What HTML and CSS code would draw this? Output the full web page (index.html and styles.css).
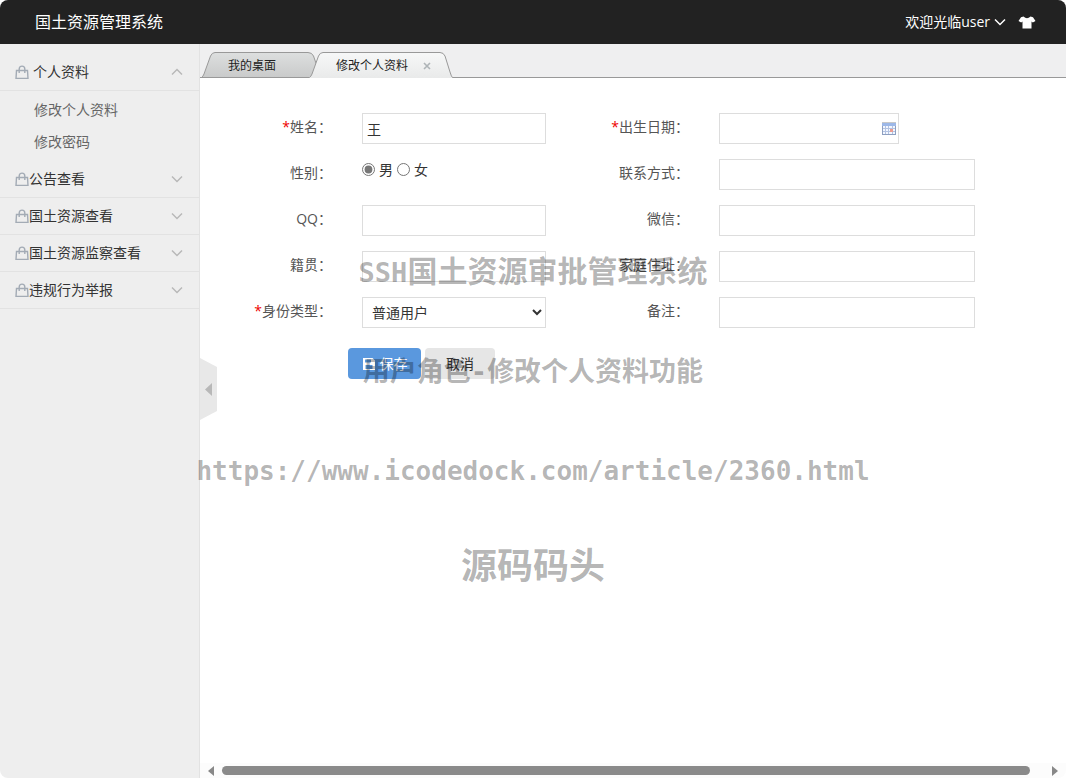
FILE: index.html
```html
<!DOCTYPE html>
<html lang="zh-CN">
<head>
<meta charset="utf-8">
<meta name="viewport" content="width=device-width, initial-scale=1">
<title>国土资源管理系统</title>
<link rel="stylesheet" href="styles.css">
</head>
<body>
<svg class="defs" aria-hidden="true">
  <symbol id="bag" viewBox="0 0 14 14"><path d="M1.5 5.5h11l.5 8H1zM4.2 8V4C4.200 .2 9.800 .2 9.800 4v4" fill="none" stroke="currentColor" stroke-width="1.400"/></symbol>
  <symbol id="down" viewBox="0 0 12 8"><path d="M1 1.500l5 5 5-5" fill="none" stroke="currentColor" stroke-width="1.500"/></symbol>
  <symbol id="up" viewBox="0 0 12 8"><path d="M1 6.500l5-5 5 5" fill="none" stroke="currentColor" stroke-width="1.500"/></symbol>
</svg>
<div class="app">
  <header class="topbar">
    <h1 class="brand">国土资源管理系统</h1>
    <div class="account">
      <button class="user" type="button">欢迎光临user
        <svg class="chevron" aria-hidden="true"><use href="#down"/></svg>
      </button>
      <button class="skin" type="button" aria-label="换肤">
        <svg width="18" height="13" viewBox="0 0 18 13" aria-hidden="true"><path d="M5.500.5Q9 4 12.500.5L15 1.200 17.500 5 14.800 6.500 13.500 5.500V12.500H4.500V5.500L3.200 6.500.5 5 3 1.200z" fill="#fff"/></svg>
      </button>
    </div>
  </header>
  <div class="body">
    <nav class="sidebar">
      <button class="group spaced" type="button" aria-expanded="true"><svg class="bag" aria-hidden="true"><use href="#bag"/></svg><span>个人资料</span><svg class="chevron" aria-hidden="true"><use href="#up"/></svg></button>
      <div class="submenu">
        <a href="#profile">修改个人资料</a>
        <a href="#password">修改密码</a>
      </div>
      <button class="group" type="button"><svg class="bag" aria-hidden="true"><use href="#bag"/></svg><span>公告查看</span><svg class="chevron" aria-hidden="true"><use href="#down"/></svg></button>
      <button class="group" type="button"><svg class="bag" aria-hidden="true"><use href="#bag"/></svg><span>国土资源查看</span><svg class="chevron" aria-hidden="true"><use href="#down"/></svg></button>
      <button class="group" type="button"><svg class="bag" aria-hidden="true"><use href="#bag"/></svg><span>国土资源监察查看</span><svg class="chevron" aria-hidden="true"><use href="#down"/></svg></button>
      <button class="group" type="button"><svg class="bag" aria-hidden="true"><use href="#bag"/></svg><span>违规行为举报</span><svg class="chevron" aria-hidden="true"><use href="#down"/></svg></button>
    </nav>
    <main class="main">
      <div class="tabs">
        <button class="tab home" type="button">
          <svg class="shape" viewBox="0 0 118 26" preserveAspectRatio="none" aria-hidden="true">
            <defs><linearGradient id="g1" x2="0" y2="1"><stop stop-color="#dddfdf"/><stop offset="1" stop-color="#c9caca"/></linearGradient></defs>
            <path d="M.5 25.500Q2 24.500 3 22L9.500 4Q11 .5 14 .5H107Q111 .5 112.500 4L118 20V25.500z" fill="url(#g1)" stroke="#999"/>
          </svg>
          <span>我的桌面</span>
        </button>
        <div class="tab active">
          <svg class="shape" viewBox="0 0 144 26" preserveAspectRatio="none" aria-hidden="true">
            <defs><linearGradient id="g2" x2="0" y2="1"><stop stop-color="#f7f8f8"/><stop offset="1" stop-color="#e9eaea"/></linearGradient></defs>
            <path d="M.5 25.500Q2 24.500 3 22L9.500 4Q11 .5 14 .5H131Q134.500 .5 136 4L141 20Q142.500 25 143.500 25.500V26H0z" fill="url(#g2)"/>
            <path d="M.5 25.500Q2 24.500 3 22L9.500 4Q11 .5 14 .5H131Q134.500 .5 136 4L141 20Q142.500 25 143.500 25.500" fill="none" stroke="#999"/>
          </svg>
          <span>修改个人资料</span>
          <button class="close" type="button" aria-label="关闭"><svg width="8" height="8" viewBox="0 0 8 8" aria-hidden="true"><path d="M1 1l6 6M7 1L1 7" stroke="#aeb4b7" stroke-width="1.600"/></svg></button>
        </div>
      </div>
      <form class="form">
        <div class="fields">
          <label for="name"><b>*</b>姓名：</label>
          <input class="text" id="name" type="text" value="王">
          <label for="birth"><b>*</b>出生日期：</label>
          <div class="date">
            <input class="text" id="birth" type="text">
            <svg class="calendar" width="14" height="13" viewBox="0 0 14 13" aria-hidden="true">
              <path d="M0 1h14v12H0z" fill="#8d9fc0"/><path d="M0 1h14v3H0z" fill="#9db8e8"/><path d="M0 0h14v1H0z" fill="#c8c8c8"/>
              <path d="M1 4h12v8H1z" fill="#f3f7ff"/><path d="M1 6.500h12M1 9.500h12M3.500 4v8M6.500 4v8M10.500 4v8" stroke="#b3c3e2"/><path d="M8 7h3v3H8z" fill="#eb9d92"/>
            </svg>
          </div>
          <span class="caption" id="sex">性别：</span>
          <div class="radios" role="radiogroup" aria-labelledby="sex">
            <input id="male" type="radio" name="sex" checked><label for="male">男</label>
            <input id="female" type="radio" name="sex"><label for="female">女</label>
          </div>
          <label for="phone">联系方式：</label>
          <input class="text" id="phone" type="text">
          <label for="qq">QQ：</label>
          <input class="text" id="qq" type="text">
          <label for="wechat">微信：</label>
          <input class="text" id="wechat" type="text">
          <label for="native">籍贯：</label>
          <input class="text" id="native" type="text">
          <label for="address">家庭住址：</label>
          <input class="text" id="address" type="text">
          <label for="role"><b>*</b>身份类型：</label>
          <select class="text" id="role"><option>普通用户</option></select>
          <label for="remark">备注：</label>
          <input class="text" id="remark" type="text">
        </div>
        <div class="actions">
          <button class="btn primary" type="button"><svg width="14" height="14" viewBox="0 0 14 14" aria-hidden="true"><path fill="#fff" fill-rule="evenodd" d="M1 1h9.500L13 3.500V13H1zM3 2.500v3h6v-3zM3.500 8v4h7V8z"/></svg>保存</button>
          <button class="btn" type="button">取消</button>
        </div>
      </form>
      <button class="handle" type="button" aria-label="收起菜单">
        <svg width="17" height="62" viewBox="0 0 17 62" aria-hidden="true"><path d="M0 0L17 9V53L0 62z" fill="#e8e8e8"/><path d="M12 25v13l-7-6.500z" fill="#b8b8b8"/></svg>
      </button>
      <div class="scrollbar" aria-hidden="true">
        <svg width="6" height="10" viewBox="0 0 6 10"><path d="M6 0v10L0 5z" fill="#888"/></svg>
        <div class="thumb"></div>
        <svg width="6" height="10" viewBox="0 0 6 10"><path d="M0 0v10l6-5z" fill="#888"/></svg>
      </div>
    </main>
  </div>
  <div class="watermark">
    <p class="system"><span class="latin">SSH</span>国土资源审批管理系统</p>
    <p class="feature">用户角色<span class="latin">-</span>修改个人资料功能</p>
    <p class="link">https://www.icodedock.com/article/2360.html</p>
    <p class="source">源码码头</p>
  </div>
</div>
</body>
</html>
```
FILE: styles.css
```css
* { box-sizing: border-box; }
body {
  margin: 0;
  background: #fff;
  color: #333;
  font: 14px/20px "Open Sans", "Noto Sans CJK SC", sans-serif;
}
button {
  margin: 0;
  padding: 0;
  border: 0;
  background: none;
  color: inherit;
  font: inherit;
  cursor: pointer;
}
svg { display: block; flex: none; }
.defs { position: absolute; width: 0; height: 0; }

.app {
  position: relative;
  display: flex;
  flex-direction: column;
  min-height: 100vh;
  overflow: hidden;
  border-radius: 8px;
}
.topbar {
  display: flex;
  align-items: center;
  justify-content: space-between;
  height: 44px;
  padding: 0 30px 0 35px;
  background: #222;
  color: #fff;
}
.brand { margin: 0; font-size: 16px; font-weight: 400; }
.account { display: flex; align-items: center; gap: 12px; }
.user { display: flex; align-items: center; gap: 4px; }
.chevron { width: 12px; height: 8px; }

.body { display: flex; flex: 1; }
.sidebar {
  width: 200px;
  flex: none;
  padding-top: 10px;
  border-right: 1px solid #e2e2e2;
  background: #eee;
}
.group {
  display: flex;
  align-items: center;
  width: 100%;
  height: 37px;
  padding: 0 16px 0 15px;
  border-bottom: 1px solid #e2e2e2;
}
.group.spaced { gap: 4px; }
.group .chevron { margin-left: auto; color: #b8b8b8; }
.bag { width: 14px; height: 14px; color: #a3abb5; }
.submenu { padding: 3px 0; }
.submenu a {
  display: block;
  padding-left: 34px;
  color: #666;
  line-height: 32px;
  text-decoration: none;
}

.main {
  position: relative;
  display: flex;
  flex: 1;
  flex-direction: column;
  min-width: 0;
  background: #fff;
}
.tabs {
  display: flex;
  height: 34px;
  padding: 8px 0 0 1px;
  border-bottom: 1px solid #999;
  background: #efeff0;
  font-size: 12px;
}
.tab {
  position: relative;
  display: flex;
  align-items: center;
  height: 26px;
  padding: 2px 0 0 27px;
  color: #222;
  white-space: nowrap;
}
.tab.home { width: 118px; }
.tab.active { gap: 15px; width: 144px; margin-left: -10px; }
.tab span, .close { position: relative; }
.shape { position: absolute; inset: 0; width: 100%; height: 100%; }

.form { flex: 1; padding: 35px 0 0; }
.fields {
  display: grid;
  grid-template-columns: 132px 184px 113px 256px;
  gap: 15px 30px;
}
.fields > label, .caption {
  color: #555;
  line-height: 28px;
  text-align: right;
  white-space: nowrap;
}
.fields b { color: #e00; font-weight: 400; }
.text {
  width: 100%;
  height: 31px;
  padding: 0 4px;
  border: 1px solid #ddd;
  background: #fff;
  color: #333;
  font: inherit;
}
select.text { padding: 0 5px; }
.date { position: relative; width: 180px; }
.calendar { position: absolute; right: 3px; top: 9px; }
.radios { display: flex; align-items: center; height: 21px; }
.radios input { width: 13px; height: 13px; margin: 0 4px 0 0; accent-color: #777; }
.radios label { margin-right: 4px; }

.actions { display: flex; gap: 4px; padding: 20px 0 0 148px; }
.btn {
  display: flex;
  align-items: center;
  justify-content: center;
  gap: 4px;
  min-width: 70px;
  height: 31px;
  border-radius: 4px;
  background: #e6e6e6;
}
.btn.primary { min-width: 73px; background: #5a98de; color: #fff; }

.handle { position: absolute; left: 0; top: 314px; }
.scrollbar {
  display: flex;
  align-items: center;
  gap: 8px;
  height: 15px;
  padding: 0 8px;
  background: #fcfcfc;
}
.thumb { flex: 1; height: 9px; margin-right: 14px; border-radius: 5px; background: #8a8a8a; }

.watermark {
  position: absolute;
  inset: 0;
  padding-top: 244px;
  color: rgba(0, 0, 0, .3);
  font-family: "Noto Sans CJK SC", sans-serif;
  font-weight: 700;
  text-align: center;
  pointer-events: none;
}
.watermark p { margin: 0; white-space: nowrap; }
.system { height: 52px; font-size: 30px; line-height: 50px; }
.feature { height: 148px; font-size: 27px; line-height: 148px; }
.latin { font-family: "DejaVu Sans Mono", monospace; font-size: 27px; }
.link { height: 54px; font-family: "DejaVu Sans Mono", monospace; font-size: 26px; line-height: 54px; }
.source { font-size: 36px; line-height: 130px; }
```
